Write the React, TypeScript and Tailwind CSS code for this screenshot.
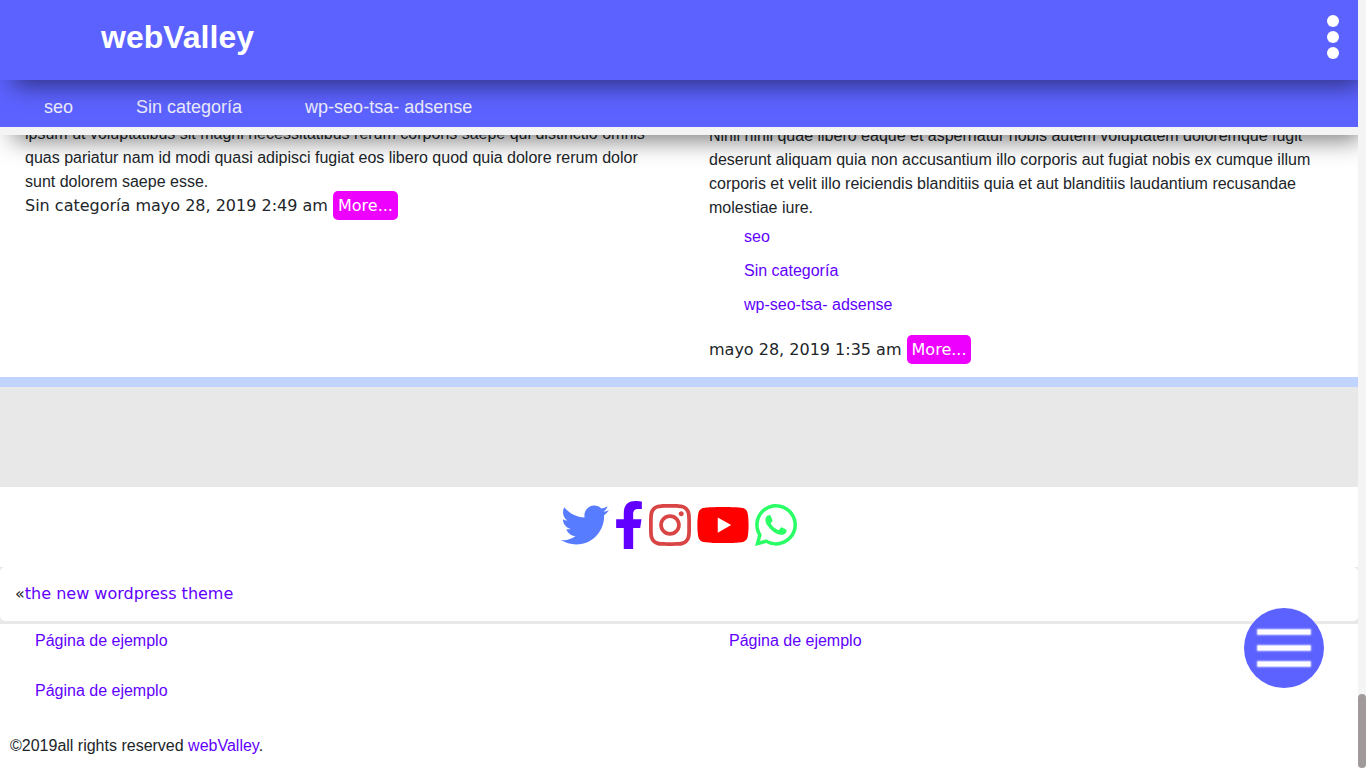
import React from "react";
import { FaFacebookF, FaInstagram, FaTwitter, FaWhatsapp, FaYoutube } from "react-icons/fa";

const categories = ["seo", "Sin categoría", "wp-seo-tsa- adsense"];

function Header() {
  return (
    <header className="relative z-10">
      <div className="relative z-10 flex h-20 items-start justify-between bg-[#5c62ff] pl-[101px] pr-[19px] shadow-[8px_10px_25px_-5px_rgba(0,0,0,0.52)]">
        <h1 className="mt-[13px] text-[32px] leading-[48px] font-bold text-white">
          <a href="#home">webValley</a>
        </h1>
        <button type="button" aria-label="Menu" className="mt-[15px] flex flex-col gap-1">
          <span className="size-3 rounded-full bg-white" />
          <span className="size-3 rounded-full bg-white" />
          <span className="size-3 rounded-full bg-white" />
        </button>
      </div>
      <nav className="border-b-8 border-[#f4f4f4] bg-[#5c62ff] shadow-[8px_10px_25px_-5px_rgba(0,0,0,0.52)]">
        <ul className="flex h-[47px] items-center gap-[63px] px-11 pt-1.5 text-lg text-[#ececfa]">
          {categories.map((c) => (
            <li key={c}>
              <a href="#category">{c}</a>
            </li>
          ))}
        </ul>
      </nav>
    </header>
  );
}

function MoreLink() {
  return (
    <a href="#more" className="rounded-[5px] bg-[#ee00ff] p-[5px] text-white">
      More...
    </a>
  );
}

function Posts() {
  return (
    <main className="-mt-[13px] grid grid-cols-2 gap-[10px] border-b-10 border-[#c0d4ff] bg-white pb-[15px]">
      <article className="px-[25px]">
        <p>
          ipsum ut voluptatibus sit magni necessitatibus rerum corporis saepe qui distinctio omnis quas
          pariatur nam id modi quasi adipisci fugiat eos libero quod quia dolore rerum dolor sunt dolorem
          saepe esse.
        </p>
        <div className="font-['DejaVu_Sans',sans-serif]">
          Sin categoría mayo 28, 2019 2:49 am <MoreLink />
        </div>
      </article>
      <article className="px-[25px] pt-0.5">
        <p>
          Nihil nihil quae libero eaque et aspernatur nobis autem voluptatem doloremque fugit deserunt
          aliquam quia non accusantium illo corporis aut fugiat nobis ex cumque illum corporis et velit
          illo reiciendis blanditiis quia et aut blanditiis laudantium recusandae molestiae iure.
        </p>
        <ul className="mb-4 pl-[35px] text-[#6200ff]">
          {categories.map((c) => (
            <li key={c} className="py-[5px]">
              <a href="#category">{c}</a>
            </li>
          ))}
        </ul>
        <div className="font-['DejaVu_Sans',sans-serif]">
          mayo 28, 2019 1:35 am <MoreLink />
        </div>
      </article>
    </main>
  );
}

function Social() {
  return (
    <div className="flex h-20 items-start justify-center gap-[5px] bg-white pt-[14px]">
      <a href="#twitter" aria-label="Twitter" className="text-[#587cff]">
        <FaTwitter className="size-12" />
      </a>
      <a href="#facebook" aria-label="Facebook" className="text-[#6200ff]">
        <FaFacebookF className="h-12 w-[30px]" />
      </a>
      <a href="#instagram" aria-label="Instagram" className="text-[#d94444]">
        <FaInstagram className="h-12 w-[42px]" />
      </a>
      <a href="#youtube" aria-label="YouTube" className="text-[#ff0000]">
        <FaYoutube className="h-12 w-[54px]" />
      </a>
      <a href="#whatsapp" aria-label="WhatsApp" className="text-[#2bff66]">
        <FaWhatsapp className="h-12 w-[42px]" />
      </a>
    </div>
  );
}

function Footer() {
  return (
    <footer className="bg-white pb-[10px]">
      <div className="grid grid-cols-2 gap-x-[30px] gap-y-[26px] pt-[5px] text-[#6200ff]">
        <a href="#page" className="pl-[35px]">Página de ejemplo</a>
        <a href="#page" className="pl-[35px]">Página de ejemplo</a>
        <a href="#page" className="pl-[35px]">Página de ejemplo</a>
      </div>
      <p className="mt-[31px] px-[10px]">
        ©2019all rights reserved{" "}
        <a href="#home" className="text-[#6200ff]">
          webValley
        </a>
        .
      </p>
    </footer>
  );
}

export default function App() {
  return (
    <div className="flex min-h-screen bg-white font-['Liberation_Sans',Arial,sans-serif] text-base text-[#212529]">
      <div className="min-w-0 flex-1 overflow-hidden">
        <Header />
        <Posts />
        <div className="h-[100px] bg-[#e8e8e8]" />
        <Social />
        <div className="bg-[#e8e8e8] pb-[3px]">
          <div className="rounded-[5px] bg-white p-[15px] font-['DejaVu_Sans',sans-serif]">
            «
            <a href="#previous" className="text-[#6200ff]">
              the new wordpress theme
            </a>
          </div>
        </div>
        <Footer />
      </div>
      <div className="relative z-20 flex w-2 flex-col justify-end bg-[#f4f4f4]">
        <div className="h-[74px] rounded-full bg-[#a09a9b]" />
      </div>
      <button
        type="button"
        aria-label="Open menu"
        className="fixed right-[42px] bottom-20 z-20 flex size-20 flex-col items-start justify-center gap-3 rounded-full bg-[#5c62ff] pl-3.5"
      >
        <span className="h-1 w-[52px] bg-white shadow-[0_0_2px_1px_#fff]" />
        <span className="h-1 w-[52px] bg-white shadow-[0_0_2px_1px_#fff]" />
        <span className="h-1 w-[52px] bg-white shadow-[0_0_2px_1px_#fff]" />
      </button>
    </div>
  );
}
